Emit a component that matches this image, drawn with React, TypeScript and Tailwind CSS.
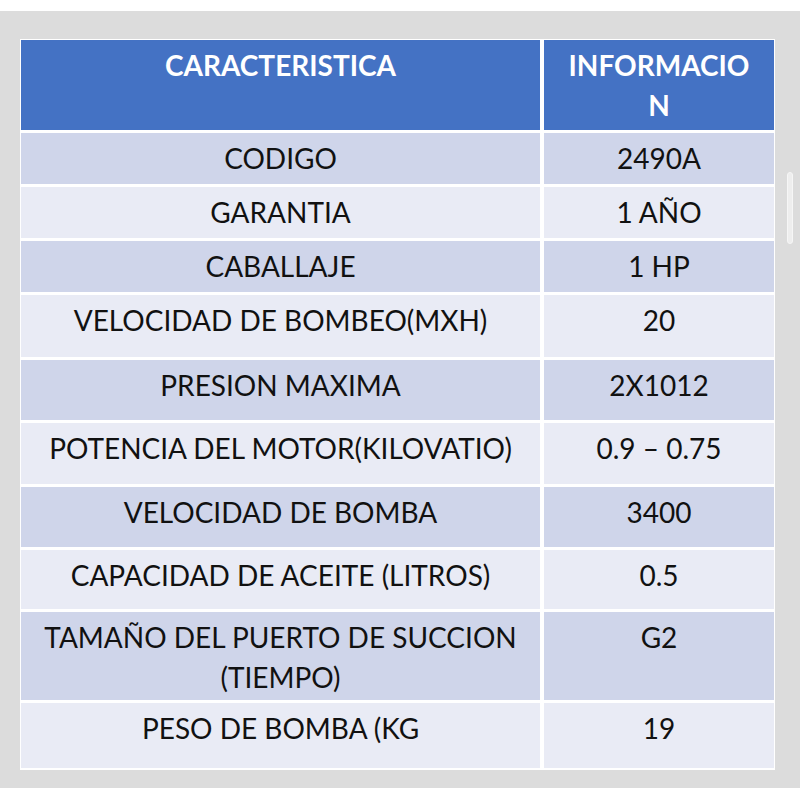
import React from "react";

type Row = { k: React.ReactNode; v: string; h: string; odd: boolean };

const rows: Row[] = [
  { k: "CODIGO", v: "2490A", h: "h-[51px]", odd: true },
  { k: "GARANTIA", v: "1 AÑO", h: "h-[51px]", odd: false },
  { k: "CABALLAJE", v: "1 HP", h: "h-[51px]", odd: true },
  { k: "VELOCIDAD DE BOMBEO(MXH)", v: "20", h: "h-[62px]", odd: false },
  { k: "PRESION MAXIMA", v: "2X1012", h: "h-[60px]", odd: true },
  { k: "POTENCIA DEL MOTOR(KILOVATIO)", v: "0.9 – 0.75", h: "h-[61px]", odd: false },
  { k: "VELOCIDAD DE BOMBA", v: "3400", h: "h-[60px]", odd: true },
  { k: "CAPACIDAD DE ACEITE (LITROS)", v: "0.5", h: "h-[59px]", odd: false },
  {
    k: (
      <>
        TAMAÑO DEL PUERTO DE SUCCION
        <br />
        (TIEMPO)
      </>
    ),
    v: "G2",
    h: "h-[88px]",
    odd: true,
  },
  { k: "PESO DE BOMBA (KG", v: "19", h: "h-[65px]", odd: false },
];

export default function App() {
  return (
    <div
      className="w-[800px] h-[800px] bg-white overflow-hidden"
      style={{ fontFamily: "Lato, 'Open Sans', sans-serif" }}
    >
      <div className="mt-[11px] h-[777px] bg-[#dcdcdc] relative pt-[28px] pl-[20px]">
        <div className="w-[755px] bg-white p-[1px] pb-[2px] grid grid-cols-[519px_230px] gap-x-[4px] gap-y-[3px]">
          <div className="bg-[#4472c4] h-[90px] pt-[5px] text-center text-white font-bold text-[28px] leading-[40px]">
            CARACTERISTICA
          </div>
          <div className="bg-[#4472c4] h-[90px] pt-[5px] text-center text-white font-bold text-[28px] leading-[40px]">
            INFORMACIO
            <br />N
          </div>
          {rows.map((r, i) => (
            <React.Fragment key={i}>
              <div
                className={`${r.h} ${r.odd ? "bg-[#cfd5ea]" : "bg-[#e9ebf5]"} pt-[5px] text-center text-[#111] text-[28px] leading-[40px]`}
              >
                {r.k}
              </div>
              <div
                className={`${r.h} ${r.odd ? "bg-[#cfd5ea]" : "bg-[#e9ebf5]"} pt-[5px] text-center text-[#111] text-[28px] leading-[40px]`}
              >
                {r.v}
              </div>
            </React.Fragment>
          ))}
        </div>
        <div className="absolute left-[787px] top-[161px] w-[6px] h-[72px] rounded-full bg-[#eeeeee] border border-[#f6f6f6]" />
      </div>
    </div>
  );
}
